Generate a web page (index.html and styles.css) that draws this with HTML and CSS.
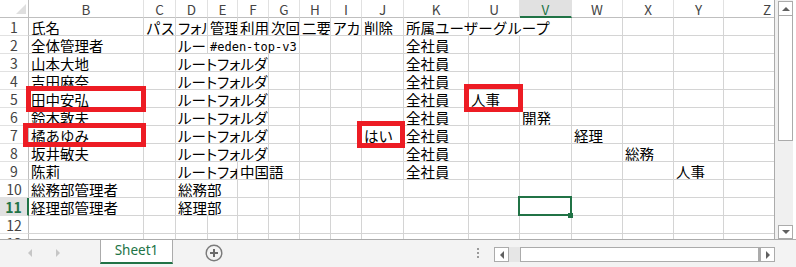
FILE: index.html
```html
<!DOCTYPE html>
<html lang="ja">
<head>
  <meta charset="UTF-8">
  <title>Sheet1</title>
  <link rel="stylesheet" href="styles.css">
</head>
<body>
  <div class="book">
    <div class="main">
      <!-- Hoja -->
      <div class="sheet">
        <div class="grid">
          <div class="corner"></div>
          <div class="ch">B</div><div class="ch">C</div><div class="ch">D</div><div class="ch">E</div>
          <div class="ch">F</div><div class="ch">G</div><div class="ch">H</div><div class="ch">I</div>
          <div class="ch">J</div><div class="ch">K</div><div class="ch">U</div><div class="ch sel">V</div>
          <div class="ch">W</div><div class="ch">X</div><div class="ch">Y</div><div class="ch">Z</div>

          <div class="rh">1</div>
          <div class="c">氏名</div><div class="c">パスワード</div><div class="c pk">フォルダ</div><div class="c">管理者</div>
          <div class="c">利用者</div><div class="c">次回ログイン</div><div class="c">二要素認証</div><div class="c pk">アカウント</div>
          <div class="c">削除</div><div class="c s3">所属ユーザーグループ</div>
          <div class="c"></div><div class="c"></div><div class="c"></div><div class="c"></div>

          <div class="rh">2</div>
          <div class="c">全体管理者</div><div class="c"></div><div class="c pk">ルートフォルダ</div>
          <div class="c s3 lat">#eden-top-v3</div>
          <div class="c"></div><div class="c"></div><div class="c"></div><div class="c">全社員</div>
          <div class="c"></div><div class="c"></div><div class="c"></div><div class="c"></div><div class="c"></div><div class="c"></div>

          <div class="rh">3</div>
          <div class="c">山本大地</div><div class="c"></div><div class="c s3 pk">ルートフォルダ</div>
          <div class="c"></div><div class="c"></div><div class="c"></div><div class="c"></div><div class="c">全社員</div>
          <div class="c"></div><div class="c"></div><div class="c"></div><div class="c"></div><div class="c"></div><div class="c"></div>

          <div class="rh">4</div>
          <div class="c">吉田麻奈</div><div class="c"></div><div class="c s3 pk">ルートフォルダ</div>
          <div class="c"></div><div class="c"></div><div class="c"></div><div class="c"></div><div class="c">全社員</div>
          <div class="c"></div><div class="c"></div><div class="c"></div><div class="c"></div><div class="c"></div><div class="c"></div>

          <div class="rh">5</div>
          <div class="c">田中安弘</div><div class="c"></div><div class="c s3 pk">ルートフォルダ</div>
          <div class="c"></div><div class="c"></div><div class="c"></div><div class="c"></div><div class="c">全社員</div>
          <div class="c">人事</div><div class="c"></div><div class="c"></div><div class="c"></div><div class="c"></div><div class="c"></div>

          <div class="rh">6</div>
          <div class="c">鈴木敦夫</div><div class="c"></div><div class="c s3 pk">ルートフォルダ</div>
          <div class="c"></div><div class="c"></div><div class="c"></div><div class="c"></div><div class="c">全社員</div>
          <div class="c"></div><div class="c">開発</div><div class="c"></div><div class="c"></div><div class="c"></div><div class="c"></div>

          <div class="rh">7</div>
          <div class="c">橘あゆみ</div><div class="c"></div><div class="c s3 pk">ルートフォルダ</div>
          <div class="c"></div><div class="c"></div><div class="c"></div><div class="c">はい</div><div class="c">全社員</div>
          <div class="c"></div><div class="c"></div><div class="c">経理</div><div class="c"></div><div class="c"></div><div class="c"></div>

          <div class="rh">8</div>
          <div class="c">坂井敏夫</div><div class="c"></div><div class="c s3 pk">ルートフォルダ</div>
          <div class="c"></div><div class="c"></div><div class="c"></div><div class="c"></div><div class="c">全社員</div>
          <div class="c"></div><div class="c"></div><div class="c"></div><div class="c">総務</div><div class="c"></div><div class="c"></div>

          <div class="rh">9</div>
          <div class="c">陈莉</div><div class="c"></div><div class="c s2 pk">ルートフォルダ</div><div class="c s2">中国語</div>
          <div class="c"></div><div class="c"></div><div class="c"></div><div class="c">全社員</div>
          <div class="c"></div><div class="c"></div><div class="c"></div><div class="c"></div><div class="c">人事</div><div class="c"></div>

          <div class="rh">10</div>
          <div class="c">総務部管理者</div><div class="c"></div><div class="c s2">総務部</div>
          <div class="c"></div><div class="c"></div><div class="c"></div><div class="c"></div><div class="c"></div><div class="c"></div>
          <div class="c"></div><div class="c"></div><div class="c"></div><div class="c"></div><div class="c"></div><div class="c"></div>

          <div class="rh sel">11</div>
          <div class="c">経理部管理者</div><div class="c"></div><div class="c s2">経理部</div>
          <div class="c"></div><div class="c"></div><div class="c"></div><div class="c"></div><div class="c"></div><div class="c"></div>
          <div class="c"></div><div class="c"></div><div class="c"></div><div class="c"></div><div class="c"></div><div class="c"></div>

          <div class="rh">12</div>
          <div class="c"></div><div class="c"></div><div class="c"></div><div class="c"></div><div class="c"></div><div class="c"></div>
          <div class="c"></div><div class="c"></div><div class="c"></div><div class="c"></div><div class="c"></div><div class="c"></div>
          <div class="c"></div><div class="c"></div><div class="c"></div><div class="c"></div>

          <div class="rh">13</div>
          <div class="c"></div><div class="c"></div><div class="c"></div><div class="c"></div><div class="c"></div><div class="c"></div>
          <div class="c"></div><div class="c"></div><div class="c"></div><div class="c"></div><div class="c"></div><div class="c"></div>
          <div class="c"></div><div class="c"></div><div class="c"></div><div class="c"></div>
        </div>

        <!-- Celda activa -->
        <div class="active-cell"></div>
        <div class="fill-handle"></div>

        <!-- Marcas rojas -->
        <div class="mark m1"></div>
        <div class="mark m2"></div>
        <div class="mark m3"></div>
        <div class="mark m4"></div>
      </div>

      <!-- Barra vertical -->
      <div class="vscroll">
        <div class="vbtn"><span class="tri-up"></span></div>
        <div class="vthumb"></div>
        <div class="vbtn down"><span class="tri-down"></span></div>
      </div>
    </div>

    <!-- Pestañas -->
    <div class="tabbar">
      <div class="nav">
        <span class="tri-left"></span>
        <span class="tri-right"></span>
      </div>
      <div class="tab">Sheet1</div>
      <div class="add">
        <svg width="18" height="18" viewBox="0 0 18 18">
          <circle cx="9" cy="9" r="7.8" fill="none" stroke="#7a7a7a" stroke-width="1.4"/>
          <path d="M9 5v8M5 9h8" stroke="#6a6a6a" stroke-width="2"/>
        </svg>
      </div>
      <div class="dots"><span></span><span></span><span></span></div>
      <div class="hscroll">
        <div class="hbtn"><span class="tri-left dark"></span></div>
        <div class="htrack"></div>
        <div class="hthumb"></div>
        <div class="hbtn"><span class="tri-right dark"></span></div>
      </div>
    </div>
  </div>
</body>
</html>
```

FILE: styles.css
```css
/* General */
* {
  box-sizing: border-box;
}

body {
  margin: 0;
  background-color: #FFF;
  font-family: "Noto Sans CJK JP", sans-serif;
}

.book {
  width: 796px;
  height: 267px;
  overflow: hidden;
}

.main {
  display: flex;
  height: 239px;
}

/* Hoja */
.sheet {
  position: relative;
  width: 775px;
  border-right: 1px solid #ABABAB;
  overflow: hidden;
}

.grid {
  display: grid;
  grid-template-columns: 29px 115px 32px 32px 30px 31px 31px 31px 31px 42px 65px 51px 52px 51px 51px 50px 87px;
  grid-auto-rows: 18px;
  width: 811px;
}

.corner {
  position: relative;
  border-right: 1px solid #BFBFBF;
  border-bottom: 1px solid #BFBFBF;
}

.corner::after {
  content: "";
  position: absolute;
  right: 2px;
  bottom: 3px;
  border-left: 10px solid transparent;
  border-bottom: 10px solid #DFDFDF;
}

.ch {
  border-right: 1px solid #E1E1E1;
  border-bottom: 1px solid #BFBFBF;
  padding-top: 1px;
  text-align: center;
  font-size: 13.5px;
  line-height: 16px;
  color: #444;
  overflow: hidden;
}

.ch.sel {
  background-color: #E1E1E1;
  border-bottom: 2px solid #217346;
  color: #217346;
}

.rh {
  border-right: 1px solid #BFBFBF;
  border-bottom: 1px solid #E1E1E1;
  padding-top: 1px;
  text-align: center;
  font-size: 14px;
  line-height: 17px;
  color: #444;
}

.rh.sel {
  background-color: #E1E1E1;
  border-right: 2px solid #217346;
  color: #217346;
  font-weight: bold;
}

.c {
  border-right: 1px solid #D4D4D4;
  border-bottom: 1px solid #D4D4D4;
  padding: 2px 0 0 2px;
  font-size: 14.5px;
  line-height: 16px;
  white-space: nowrap;
  overflow: hidden;
  color: #000;
}

.pk {
  font-feature-settings: "palt";
}

.lat {
  padding-top: 4px;
  font-family: "DejaVu Sans Mono", monospace;
  font-size: 12px;
  line-height: 14px;
}

.s2 {
  grid-column: span 2;
}

.s3 {
  grid-column: span 3;
}

/* Celda activa */
.active-cell {
  position: absolute;
  left: 518px;
  top: 196px;
  width: 54px;
  height: 20px;
  border: 2px solid #217346;
}

.fill-handle {
  position: absolute;
  left: 568px;
  top: 213px;
  width: 5px;
  height: 5px;
  background-color: #217346;
}

/* Marcas rojas */
.mark {
  position: absolute;
  border: 5px solid #ED1C24;
}

.m1 { left: 26px; top: 86px; width: 120px; height: 26px; }
.m2 { left: 23px; top: 123px; width: 123px; height: 24px; }
.m3 { left: 357px; top: 121px; width: 48px; height: 27px; }
.m4 { left: 464px; top: 84px; width: 59px; height: 28px; }

/* Barra vertical */
.vscroll {
  width: 21px;
  display: flex;
  flex-direction: column;
  padding: 1px 0 0 3px;
  background-color: #F0F0F0;
  border-right: 3px solid #FFF;
}

.vbtn {
  width: 15px;
  height: 15px;
  border: 1px solid #ABABAB;
  background-color: #FFF;
  display: flex;
  align-items: center;
  justify-content: center;
}

.vbtn.down {
  margin-top: auto;
  height: 14px;
}

.vthumb {
  width: 15px;
  height: 126px;
  margin-top: -1px;
  border: 1px solid #ABABAB;
  background-color: #FFF;
}

.tri-up {
  border-left: 4px solid transparent;
  border-right: 4px solid transparent;
  border-bottom: 4px solid #606060;
}

.tri-down {
  border-left: 4px solid transparent;
  border-right: 4px solid transparent;
  border-top: 4px solid #606060;
}

/* Pestañas */
.tabbar {
  display: flex;
  align-items: flex-start;
  height: 28px;
  border-top: 1px solid #ABABAB;
  background-color: #F3F3F3;
}

.nav {
  width: 100px;
  height: 25px;
  display: flex;
  align-items: center;
  padding-left: 28px;
  gap: 24px;
}

.tri-left {
  border-top: 4px solid transparent;
  border-bottom: 4px solid transparent;
  border-right: 4px solid #C6C6C6;
}

.tri-right {
  border-top: 4px solid transparent;
  border-bottom: 4px solid transparent;
  border-left: 4px solid #C6C6C6;
}

.tri-left.dark {
  border-right-color: #606060;
}

.tri-right.dark {
  border-left-color: #606060;
}

.tab {
  width: 73px;
  height: 24px;
  background-color: #FFF;
  border-left: 1px solid #ABABAB;
  border-right: 1px solid #ABABAB;
  border-bottom: 2px solid #217346;
  text-align: center;
  font-family: "Noto Sans", sans-serif;
  font-size: 13.5px;
  line-height: 21px;
  color: #217346;
}

.add {
  margin: 4px 0 0 32px;
  width: 18px;
  height: 18px;
}

.add svg {
  display: block;
}

.dots {
  margin: 8px 0 0 auto;
  display: flex;
  flex-direction: column;
  gap: 2px;
}

.dots span {
  width: 2px;
  height: 2px;
  background-color: #9A9A9A;
}

.hscroll {
  display: flex;
  margin: 7px 21px 0 15px;
  height: 15px;
}

.hbtn {
  width: 15px;
  height: 15px;
  border: 1px solid #ABABAB;
  background-color: #FFF;
  display: flex;
  align-items: center;
  justify-content: center;
}

.htrack {
  width: 11px;
  background-color: #E6E6E6;
}

.hthumb {
  width: 240px;
  border: 1px solid #ABABAB;
  border-right-width: 2px;
  background-color: #FFF;
}
```
